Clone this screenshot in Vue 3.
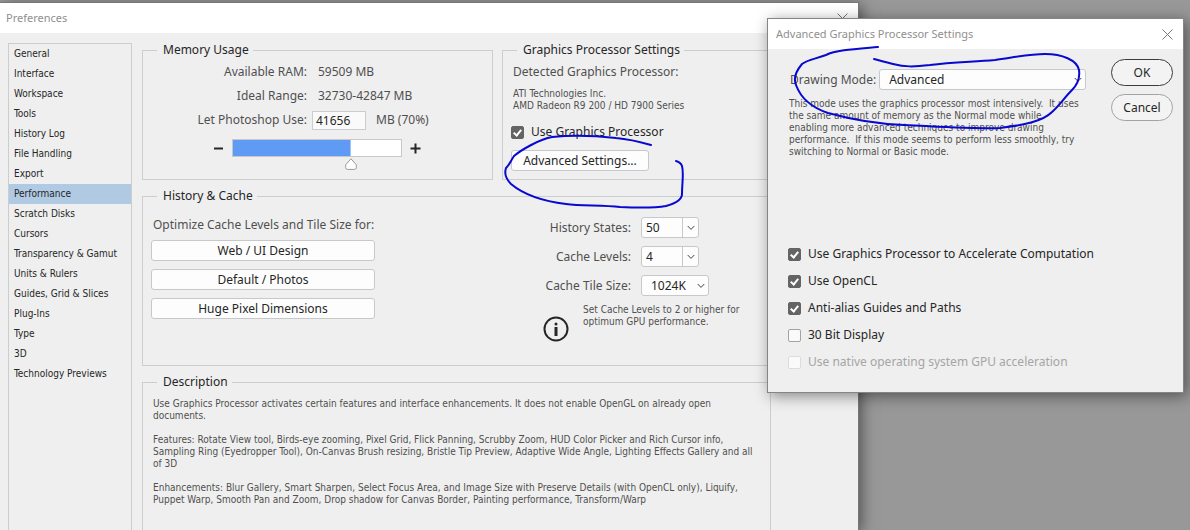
<template>
  <div class="desktop">
    <section class="window" aria-label="Preferences">
      <header class="title-bar">
        <span>Preferences</span>
        <button class="close" aria-label="Close preferences">
          <svg width="11" height="11" viewBox="0 0 11 11"><path d="M.5.5l10 10M10.5.5l-10 10" /></svg>
        </button>
      </header>

      <div class="window-body">
        <nav class="sidebar">
          <button
            v-for="item in sections"
            :key="item"
            :class="{ active: item === current }"
            @click="current = item"
          >{{ item }}</button>
        </nav>

        <main class="content">
          <div class="top-row">
            <fieldset class="memory">
              <legend>Memory Usage</legend>
              <div class="mem-row">
                <span class="mem-label">Available RAM:</span>
                <span class="mem-value">{{ totalRam }} MB</span>
              </div>
              <div class="mem-row">
                <span class="mem-label">Ideal Range:</span>
                <span class="mem-value">32730-42847 MB</span>
              </div>
              <div class="mem-row">
                <label class="mem-label" for="ram">Let Photoshop Use:</label>
                <input id="ram" v-model.number="ram" class="ram-input" type="text" />
                <span>MB ({{ percent }}%)</span>
              </div>
              <div class="slider-row">
                <button class="step" aria-label="Less memory" @click="ram -= 100">
                  <svg width="11" height="11" viewBox="0 0 11 11"><path d="M1 5.5h9" /></svg>
                </button>
                <input
                  v-model.number="ram"
                  class="slider"
                  type="range"
                  min="0"
                  :max="totalRam"
                  aria-label="Memory"
                  :style="{ '--fill': percent + '%' }"
                />
                <button class="step" aria-label="More memory" @click="ram += 100">
                  <svg width="11" height="11" viewBox="0 0 11 11"><path d="M.5 5.5h10M5.5.5v10" /></svg>
                </button>
              </div>
            </fieldset>

            <fieldset class="graphics">
              <legend>Graphics Processor Settings</legend>
              <p class="detected">Detected Graphics Processor:</p>
              <p class="small gpu">ATI Technologies Inc.<br />AMD Radeon R9 200 / HD 7900 Series</p>
              <label class="check">
                <input v-model="useGpu" type="checkbox" />Use Graphics Processor
              </label>
              <button class="btn advanced">Advanced Settings...</button>
            </fieldset>
          </div>

          <fieldset class="history">
            <legend>History &amp; Cache</legend>
            <div class="presets">
              <p>Optimize Cache Levels and Tile Size for:</p>
              <button v-for="p in presets" :key="p" class="btn">{{ p }}</button>
            </div>
            <div class="cache">
              <div v-for="f in cacheFields" :key="f.id" class="cache-row">
                <label :for="f.id">{{ f.label }}</label>
                <span class="select" :class="f.kind">
                  <select :id="f.id" v-model="f.value">
                    <option v-for="o in f.options" :key="o">{{ o }}</option>
                  </select>
                  <svg width="8" height="6" viewBox="0 0 8 6"><path d="M.7 1L4 4.4 7.3 1" /></svg>
                </span>
              </div>
              <div class="hint">
                <svg width="26" height="26" viewBox="0 0 26 26">
                  <circle cx="13" cy="13" r="11.5" />
                  <rect x="11.5" y="6.5" width="3" height="3" rx="1.5" />
                  <rect x="11.5" y="11" width="3" height="9" />
                </svg>
                <p class="small">Set Cache Levels to 2 or higher for<br />optimum GPU performance.</p>
              </div>
            </div>
          </fieldset>

          <fieldset class="description">
            <legend>Description</legend>
            <p class="small">Use Graphics Processor activates certain features and interface enhancements. It does not enable OpenGL on already open<br />documents.</p>
            <p class="small">Features: Rotate View tool, Birds-eye zooming, Pixel Grid, Flick Panning, Scrubby Zoom, HUD Color Picker and Rich Cursor info,<br />Sampling Ring (Eyedropper Tool), On-Canvas Brush resizing, Bristle Tip Preview, Adaptive Wide Angle, Lighting Effects Gallery and all<br />of 3D</p>
            <p class="small">Enhancements: Blur Gallery, Smart Sharpen, Select Focus Area, and Image Size with Preserve Details (with OpenCL only), Liquify,<br />Puppet Warp, Smooth Pan and Zoom, Drop shadow for Canvas Border, Painting performance, Transform/Warp</p>
          </fieldset>
        </main>
      </div>
    </section>

    <section class="dialog" role="dialog" aria-label="Advanced Graphics Processor Settings">
      <header class="title-bar">
        <span>Advanced Graphics Processor Settings</span>
        <button class="close" aria-label="Close dialog">
          <svg width="11" height="11" viewBox="0 0 11 11"><path d="M.5.5l10 10M10.5.5l-10 10" /></svg>
        </button>
      </header>
      <div class="dialog-body">
        <div class="settings">
          <div class="mode-row">
            <label for="mode">Drawing Mode:</label>
            <span class="select wide">
              <select id="mode" v-model="mode">
                <option>Basic</option>
                <option>Normal</option>
                <option>Advanced</option>
              </select>
              <svg width="8" height="6" viewBox="0 0 8 6"><path d="M.7 1L4 4.4 7.3 1" /></svg>
            </span>
          </div>
          <p class="small mode-text">This mode uses the graphics processor most intensively.&nbsp; It uses<br />the same amount of memory as the Normal mode while<br />enabling more advanced techniques to improve drawing<br />performance.&nbsp; If this mode seems to perform less smoothly, try<br />switching to Normal or Basic mode.</p>
          <div class="checks">
            <label v-for="o in options" :key="o.label" class="check" :class="{ disabled: o.disabled }">
              <input v-model="o.on" type="checkbox" :disabled="o.disabled" />{{ o.label }}
            </label>
          </div>
        </div>
        <div class="actions">
          <button class="pill primary">OK</button>
          <button class="pill">Cancel</button>
        </div>
      </div>
    </section>

    <!-- pen marks over both windows -->
    <svg class="ink" width="1190" height="530" viewBox="0 0 1190 530">
      <path d="M651 145C637 141 628 139 616 138C590 135 570 135 552 137C540 139 521 150 514 156C510 162 510 164 506 168C504 174 506 179 511 184C523 194 541 201 566 204C581 206 602 205 620 207C640 208 655 208 666 206C677 203 682 199 682 194C682 183 684 173 682 166C681 163 679 162 676 161" />
      <path d="M878 47C855 49 836 50 826 55C815 59 807 60 802 64C797 70 793 78 796 85C800 96 810 107 828 113C850 119 876 124 904 125C940 127 970 129 1000 128C1025 125 1043 121 1052 112C1060 105 1064 98 1072 90C1079 83 1080 77 1079 70C1077 60 1062 54 1045 54C1030 54 1016 57 995 60C970 62 951 62 930 65C913 67 905 67 893 64C885 62 881 61 874 59" />
    </svg>
  </div>
</template>

<script setup>
import { ref, computed } from 'vue'

const sections = [
  'General', 'Interface', 'Workspace', 'Tools', 'History Log', 'File Handling',
  'Export', 'Performance', 'Scratch Disks', 'Cursors', 'Transparency & Gamut',
  'Units & Rulers', 'Guides, Grid & Slices', 'Plug-Ins', 'Type', '3D',
  'Technology Previews'
]
const current = ref('Performance')

const totalRam = 59509
const ram = ref(41656)
const percent = computed(() => Math.round((ram.value / totalRam) * 100))

const useGpu = ref(true)
const presets = ['Web / UI Design', 'Default / Photos', 'Huge Pixel Dimensions']

const cacheFields = ref([
  { id: 'states', label: 'History States:', value: '50', options: ['20', '50', '100'], kind: 'split' },
  { id: 'levels', label: 'Cache Levels:', value: '4', options: ['1', '2', '4', '8'], kind: 'split' },
  { id: 'tile', label: 'Cache Tile Size:', value: '1024K', options: ['128K', '1024K'], kind: 'plain' }
])

const mode = ref('Advanced')
const options = ref([
  { label: 'Use Graphics Processor to Accelerate Computation', on: true },
  { label: 'Use OpenCL', on: true },
  { label: 'Anti-alias Guides and Paths', on: true },
  { label: '30 Bit Display', on: false },
  { label: 'Use native operating system GPU acceleration', on: false, disabled: true }
])
</script>

<style>
body {
  margin: 0;
}
</style>

<style scoped>
.desktop {
  position: relative;
  box-sizing: border-box;
  display: flex;
  height: 100vh;
  padding: 3px 332px 0 0;
  overflow: hidden;
  background: #989898;
  color: #4f4f4f;
  font-family: "Noto Sans", sans-serif;
  font-size: 12px;
  line-height: 16px;
}

.desktop * {
  box-sizing: border-box;
}

p {
  margin: 0;
}

button,
input,
select {
  margin: 0;
  padding: 0;
  font: inherit;
  color: #262626;
}

.small {
  font-family: "DejaVu Sans Condensed", sans-serif;
  font-size: 10px;
  line-height: 12px;
}

.window {
  flex: 1;
  min-width: 0;
  display: flex;
  flex-direction: column;
  background: #efefef;
  box-shadow: 0 0 0 1px #777, 3px 2px 14px rgba(0, 0, 0, 0.5);
}

.title-bar {
  display: flex;
  align-items: center;
  justify-content: space-between;
  height: 30px;
  padding: 0 10px 0 6px;
  background: #fff;
  color: #8f8f8f;
  font-size: 11px;
}

.close {
  display: flex;
  border: none;
  background: none;
}

.close svg {
  fill: none;
  stroke: #777;
}

.window-body {
  flex: 1;
  display: flex;
  min-height: 0;
  padding: 9px 87px 0 8px;
  gap: 10px;
}

.sidebar {
  width: 124px;
  flex: none;
  display: flex;
  flex-direction: column;
  margin-top: 1px;
  border: 1px solid #cbcdce;
  border-bottom: none;
}

.sidebar button {
  height: 20px;
  padding: 0 5px;
  border: none;
  background: none;
  text-align: left;
  font-family: "DejaVu Sans Condensed", sans-serif;
  font-size: 10px;
}

.sidebar button.active {
  background: #b0cae4;
}

.content {
  flex: 1;
  min-width: 0;
  display: flex;
  flex-direction: column;
  gap: 8px;
}

.top-row {
  display: flex;
  gap: 9px;
}

fieldset {
  min-width: 0;
  margin: 0;
  padding: 0 10px;
  border: 1px solid #cbcdce;
}

legend {
  margin-left: 4px;
  padding: 0 4px 0 6px;
  color: #262626;
}

.memory {
  flex: 1 1 351px;
  height: 138px;
}

.graphics {
  flex: 1 1 269px;
}

.mem-row {
  display: flex;
  align-items: center;
  height: 24px;
}

.mem-row:nth-of-type(1) {
  margin-top: 2px;
}

.mem-label {
  width: 154px;
  flex: none;
  text-align: right;
}

.mem-value {
  margin-left: 11px;
}

.ram-input {
  width: 54px;
  height: 19px;
  margin: 0 10px 0 5px;
  padding-left: 3px;
  border: 1px solid #cbcdce;
  background: #fafafa;
}

.slider-row {
  display: flex;
  align-items: center;
  gap: 8px;
  margin-top: 7px;
  padding-left: 60px;
}

.step {
  display: flex;
  border: none;
  background: none;
}

.step svg {
  stroke: #262626;
  stroke-width: 2;
}

.slider {
  appearance: none;
  width: 170px;
  height: 18px;
  border: 1px solid #c6c8ca;
  background: linear-gradient(#5f9bf4, #5f9bf4) 0 0 / var(--fill) 100% no-repeat #fff;
}

.slider::-webkit-slider-runnable-track {
  height: 16px;
  margin: 0 -6px;
}

.slider::-webkit-slider-thumb {
  appearance: none;
  width: 12px;
  height: 12px;
  margin-top: 18px;
  background: url("data:image/svg+xml,%3Csvg xmlns='http://www.w3.org/2000/svg' viewBox='0 0 12 12'%3E%3Cpath d='M6 .8L11.3 6.8V9.5Q11.3 11.4 9.4 11.4H2.6Q.7 11.4 .7 9.5V6.8Z' fill='white' stroke='%23999'/%3E%3C/svg%3E");
}

.detected {
  margin-top: 6px;
}

.gpu {
  margin-top: 8px;
}

.check {
  display: flex;
  align-items: center;
  gap: 7px;
  color: #262626;
}

.check input {
  appearance: none;
  position: relative;
  width: 13px;
  height: 13px;
  flex: none;
  border: 1px solid #a3a3a3;
  border-radius: 2px;
  background: #fafafa;
}

.check input:checked {
  border-color: #646464;
  background: #646464;
}

.check input:checked::after {
  content: "";
  position: absolute;
  box-sizing: border-box;
  left: 3px;
  top: 1px;
  width: 5px;
  height: 8px;
  border: solid #fff;
  border-width: 0 2px 2px 0;
  transform: rotate(40deg);
}

.check.disabled {
  color: #a5a5a5;
}

.check.disabled input {
  border-color: #dcdcdc;
}

.graphics .check {
  margin: 12px 0 10px -2px;
}

.btn {
  height: 21px;
  border: 1px solid #c6c8ca;
  border-radius: 3px;
  background: #fdfdfd;
}

.advanced {
  width: 138px;
  margin-left: -2px;
}

.history {
  display: flow-root;
  height: 178px;
  padding: 0 48px 0 8px;
}

.history legend {
  margin-left: 6px;
}

.presets,
.cache {
  float: left;
}

.presets {
  width: 224px;
  display: flex;
  flex-direction: column;
  gap: 8px;
  padding-top: 13px;
}

.presets p {
  padding-left: 2px;
  margin-bottom: -1px;
}

.cache {
  float: right;
  width: 190px;
  margin-right: -11px;
  padding-top: 13px;
  display: flex;
  flex-direction: column;
  gap: 8px;
}

.cache-row {
  display: flex;
  align-items: center;
  gap: 10px;
}

.cache-row label {
  width: 88px;
  text-align: right;
  white-space: nowrap;
}

.select {
  position: relative;
  display: block;
  width: 58px;
  height: 21px;
}

.select.plain {
  width: 68px;
}

.select select {
  appearance: none;
  display: block;
  width: 100%;
  height: 100%;
  padding-left: 4px;
  border: 1px solid #c6c8ca;
  border-radius: 3px;
  background: #fdfdfd;
}

.select.plain select,
.select.wide select {
  padding-left: 9px;
}

.select svg {
  position: absolute;
  right: 4px;
  top: 8px;
  fill: none;
  stroke: #444;
  pointer-events: none;
}

.select.split::after {
  content: "";
  position: absolute;
  right: 16px;
  top: 1px;
  bottom: 1px;
  border-left: 1px solid #c6c8ca;
}

.hint {
  display: flex;
  gap: 14px;
}

.hint svg {
  flex: none;
  margin-top: 12px;
  fill: #262626;
}

.hint circle {
  fill: none;
  stroke: #262626;
  stroke-width: 2;
}

.hint p {
  white-space: nowrap;
}

.description {
  flex: 1;
  border-bottom: none;
  white-space: nowrap;
}

.description p {
  margin-bottom: 12px;
}

.description legend + p {
  margin-top: 8px;
}

.dialog {
  position: absolute;
  left: 767px;
  right: 6px;
  top: 18px;
  border: 1px solid #858585;
  background: #efefef;
  box-shadow: 3px 3px 14px rgba(0, 0, 0, 0.45);
}

.dialog .title-bar {
  padding-left: 8px;
  padding-right: 10px;
}

.dialog-body {
  display: flex;
  justify-content: space-between;
  padding: 10px 10px 22px 20px;
}

.mode-row {
  display: flex;
  align-items: center;
  gap: 3px;
  margin-top: 10px;
  padding-left: 2px;
}

.select.wide {
  width: 207px;
}

.mode-text {
  margin-top: 8px;
  padding-left: 1px;
  white-space: nowrap;
}

.checks {
  display: flex;
  flex-direction: column;
  gap: 11px;
  margin-top: 88px;
}

.actions {
  display: flex;
  flex-direction: column;
  gap: 8px;
}

.pill {
  width: 62px;
  height: 27px;
  border: 1px solid #a3a3a3;
  border-radius: 14px;
  background: #f3f3f3;
}

.pill.primary {
  border-color: #3c3c3c;
}

.ink {
  position: absolute;
  left: 0;
  top: 0;
  fill: none;
  stroke: #0808cf;
  stroke-width: 2;
  stroke-linecap: round;
  pointer-events: none;
}
</style>
